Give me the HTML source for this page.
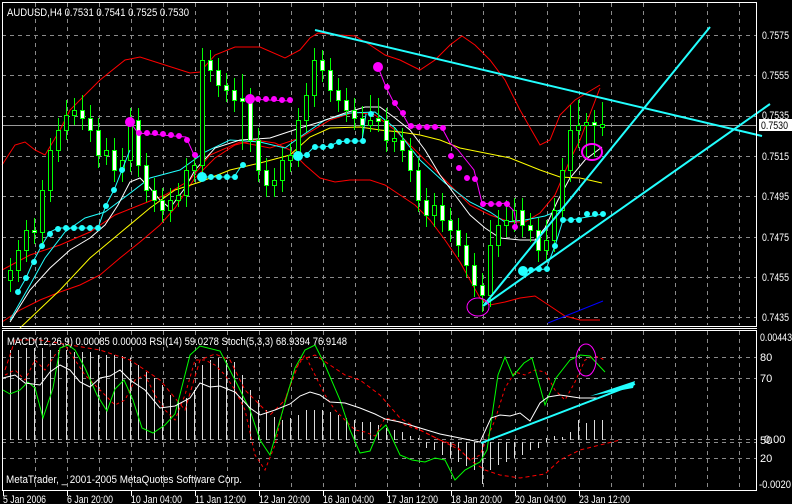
<!DOCTYPE html>
<html><head><meta charset="utf-8"><style>
html,body{margin:0;padding:0;background:#000;width:792px;height:504px;overflow:hidden}
svg{display:block}
text{font-family:"Liberation Sans",sans-serif;font-size:11px;fill:#fff}
</style></head><body>
<svg width="792" height="504" viewBox="0 0 792 504" xmlns="http://www.w3.org/2000/svg">
<rect width="792" height="504" fill="#000"/>
<g stroke="#8a8a8a" stroke-width="1" stroke-dasharray="4,4" fill="none">
<path d="M2 35.5H756M2 75.5H756M2 116.5H756M2 156.5H756M2 196.5H756M2 237.5H756M2 277.5H756M2 317.5H756"/>
<path d="M2 357.5H756M2 378.5H756M2 439.5H756M2 442.5H756M2 458.5H756"/>
<path d="M35.5 3V325M67.5 3V325M99.5 3V325M131.5 3V325M163.5 3V325M195.5 3V325M227.5 3V325M259.5 3V325M291.5 3V325M323.5 3V325M355.5 3V325M387.5 3V325M419.5 3V325M451.5 3V325M483.5 3V325M515.5 3V325M547.5 3V325M579.5 3V325M611.5 3V325M643.5 3V325M675.5 3V325M707.5 3V325M739.5 3V325"/>
<path d="M35.5 331V490M67.5 331V490M99.5 331V490M131.5 331V490M163.5 331V490M195.5 331V490M227.5 331V490M259.5 331V490M291.5 331V490M323.5 331V490M355.5 331V490M387.5 331V490M419.5 331V490M451.5 331V490M483.5 331V490M515.5 331V490M547.5 331V490M579.5 331V490M611.5 331V490M643.5 331V490M675.5 331V490M707.5 331V490M739.5 331V490"/>
</g>
<path d="M2 125.5H756" stroke="#9a9a9a"/>
<g fill="none" stroke="#f00" stroke-width="1">
<polyline points="2,165 15,145 25,142 35,150 45,155 60,130 70,110 85,95 100,80 125,60 140,57 165,65 190,73 200,72 215,55 235,47 260,47 285,58 300,50 310,38 318,33 340,35 355,36 370,45 385,55 400,60 420,70 435,60 450,45 462,36 475,45 490,60 505,80 520,110 540,145 550,140 560,115 575,100 600,85"/>
<polyline points="2,322 20,310 40,300 60,292 80,285 100,275 120,258 140,242 160,225 175,208 195,178 215,158 235,145 255,140 275,143 290,150 305,165 320,178 335,182 350,180 370,180 385,185 400,195 415,205 430,220 445,240 460,262 470,280 480,298 490,305 505,302 520,298 535,296 550,306 565,316 580,320 600,320"/>
<polyline points="2,270 30,255 60,245 90,232 115,215 140,205 165,195 190,180 210,155 240,142 270,148 300,138 330,120 355,112 375,115 395,130 410,145 430,165 450,185 470,205 490,215 510,222 525,222 540,213 555,195 570,160 580,140 600,88"/>
</g>
<polyline fill="none" stroke="#2ff" stroke-width="1" points="10,320 30,285 45,258 65,232 85,218 105,212 125,197 150,178 180,170 205,152 230,140 260,142 285,148 300,137 325,120 350,113 375,112 395,128 420,160 445,183 470,202 490,212 505,222 525,220 545,216 560,210"/>
<polyline fill="none" stroke="#fff" stroke-width="1" points="10,322 30,290 50,268 70,250 90,238 105,225 118,205 130,182 140,178 150,188 160,200 170,208 185,188 195,170 215,148 240,140 270,138 300,128 320,122 345,113 365,107 380,107 395,118 410,130 425,150 440,175 455,195 470,215 485,228 500,238 520,240 535,240 545,228 558,200 570,178 585,160 602,147"/>
<polyline fill="none" stroke="#ff0" stroke-width="1" points="20,328 60,290 90,258 120,233 150,208 175,190 200,182 230,170 260,163 290,155 310,137 330,128 360,127 380,130 400,132 420,135 440,140 460,148 480,152 510,158 540,170 560,177 580,178 602,183"/>
<path stroke="#0f0" stroke-width="1" fill="none" d="M10.5 258V292M18.5 240V282M26.5 220V262M34.5 218V244M42.5 180V244M50.5 138V202M58.5 118V162M66.5 100V140M74.5 98V125M82.5 95V130M90.5 105V142M98.5 118V168M106.5 138V165M114.5 138V182M122.5 148V182M130.5 108V172M138.5 108V177M146.5 153V202M154.5 178V212M162.5 188V222M170.5 188V222M178.5 183V207M186.5 158V207M194.5 153V182M202.5 48V177M210.5 50V82M218.5 58V97M226.5 73V102M234.5 78V112M242.5 74V150M250.5 88V152M258.5 128V182M266.5 158V197M274.5 168V197M282.5 148V192M290.5 143V172M298.5 108V167M306.5 83V132M314.5 48V107M322.5 50V82M330.5 58V102M338.5 78V112M346.5 88V122M354.5 98V130M362.5 106V137M370.5 95V132M378.5 98V132M386.5 108V152M394.5 128V152M402.5 128V162M410.5 138V182M418.5 158V212M426.5 188V227M434.5 193V227M442.5 193V232M450.5 208V242M458.5 218V257M466.5 233V277M474.5 253V297M482.5 273V312M490.5 220V307M498.5 210V257M506.5 200V237M514.5 198V232M522.5 198V237M530.5 213V242M538.5 218V262M546.5 220V262M554.5 198V252M562.5 158V222M570.5 105V182M578.5 100V148M586.5 113V157M594.5 110V157M602.5 102V136"/>
<g stroke="#0f0" stroke-width="1">
<g fill="#000">
<rect x="8.5" y="270.5" width="4" height="10"/><rect x="16.5" y="250.5" width="4" height="20"/><rect x="24.5" y="230.5" width="4" height="20"/><rect x="40.5" y="190.5" width="4" height="42"/><rect x="48.5" y="150.5" width="4" height="40"/><rect x="56.5" y="130.5" width="4" height="20"/><rect x="64.5" y="115.5" width="4" height="15"/><rect x="72.5" y="110.5" width="4" height="5"/><rect x="104.5" y="150.5" width="4" height="5"/><rect x="120.5" y="160.5" width="4" height="10"/><rect x="128.5" y="120.5" width="4" height="40"/><rect x="168.5" y="200.5" width="4" height="10"/><rect x="176.5" y="195.5" width="4" height="5"/><rect x="184.5" y="170.5" width="4" height="25"/><rect x="192.5" y="165.5" width="4" height="5"/><rect x="200.5" y="60.5" width="4" height="105"/><rect x="272.5" y="180.5" width="4" height="5"/><rect x="280.5" y="160.5" width="4" height="20"/><rect x="288.5" y="155.5" width="4" height="5"/><rect x="296.5" y="120.5" width="4" height="35"/><rect x="304.5" y="95.5" width="4" height="25"/><rect x="312.5" y="60.5" width="4" height="35"/><rect x="368.5" y="120.5" width="4" height="5"/><rect x="392.5" y="138.5" width="4" height="3"/><rect x="432.5" y="205.5" width="4" height="10"/><rect x="488.5" y="245.5" width="4" height="50"/><rect x="496.5" y="225.5" width="4" height="20"/><rect x="504.5" y="220.5" width="4" height="5"/><rect x="512.5" y="210.5" width="4" height="10"/><rect x="544.5" y="240.5" width="4" height="10"/><rect x="552.5" y="210.5" width="4" height="30"/><rect x="560.5" y="170.5" width="4" height="40"/><rect x="568.5" y="130.5" width="4" height="40"/><rect x="576.5" y="125.5" width="4" height="5"/><rect x="584.5" y="122.5" width="4" height="3"/><rect x="600.5" y="124.5" width="4" height="3"/>
</g>
<g fill="#fff">
<rect x="32.5" y="230.5" width="4" height="2"/><rect x="80.5" y="110.5" width="4" height="8"/><rect x="88.5" y="118.5" width="4" height="12"/><rect x="96.5" y="130.5" width="4" height="25"/><rect x="112.5" y="150.5" width="4" height="20"/><rect x="136.5" y="120.5" width="4" height="45"/><rect x="144.5" y="165.5" width="4" height="25"/><rect x="152.5" y="190.5" width="4" height="10"/><rect x="160.5" y="200.5" width="4" height="10"/><rect x="208.5" y="60.5" width="4" height="10"/><rect x="216.5" y="70.5" width="4" height="15"/><rect x="224.5" y="85.5" width="4" height="5"/><rect x="232.5" y="90.5" width="4" height="10"/><rect x="240.5" y="98.5" width="4" height="3"/><rect x="248.5" y="100.5" width="4" height="40"/><rect x="256.5" y="140.5" width="4" height="30"/><rect x="264.5" y="170.5" width="4" height="15"/><rect x="320.5" y="60.5" width="4" height="10"/><rect x="328.5" y="70.5" width="4" height="20"/><rect x="336.5" y="90.5" width="4" height="10"/><rect x="344.5" y="100.5" width="4" height="10"/><rect x="352.5" y="110.5" width="4" height="8"/><rect x="360.5" y="118.5" width="4" height="7"/><rect x="376.5" y="118.5" width="4" height="3"/><rect x="384.5" y="120.5" width="4" height="20"/><rect x="400.5" y="140.5" width="4" height="10"/><rect x="408.5" y="150.5" width="4" height="20"/><rect x="416.5" y="170.5" width="4" height="30"/><rect x="424.5" y="200.5" width="4" height="15"/><rect x="440.5" y="205.5" width="4" height="15"/><rect x="448.5" y="220.5" width="4" height="10"/><rect x="456.5" y="230.5" width="4" height="15"/><rect x="464.5" y="245.5" width="4" height="20"/><rect x="472.5" y="265.5" width="4" height="20"/><rect x="480.5" y="285.5" width="4" height="10"/><rect x="520.5" y="210.5" width="4" height="15"/><rect x="528.5" y="225.5" width="4" height="5"/><rect x="536.5" y="230.5" width="4" height="20"/><rect x="592.5" y="122.5" width="4" height="3"/>
</g></g>
<g fill="#f0f" stroke="#f0f">
<polyline fill="none" points="130,122 138,133 186,137 194,155"/>
<circle cx="130" cy="122" r="4.5"/>
<circle cx="139" cy="133" r="2.5"/><circle cx="147" cy="133" r="2.5"/><circle cx="155" cy="133" r="2.5"/><circle cx="163" cy="134" r="2.5"/><circle cx="171" cy="135" r="2.5"/><circle cx="179" cy="136" r="2.5"/><circle cx="187" cy="140" r="2.5"/><circle cx="195" cy="155" r="2.5"/>
<polyline fill="none" points="250,99 290,101"/>
<circle cx="250" cy="99" r="4.5"/><circle cx="258" cy="99" r="2.5"/><circle cx="266" cy="99" r="2.5"/><circle cx="274" cy="99" r="2.5"/><circle cx="282" cy="100" r="2.5"/><circle cx="290" cy="100" r="2.5"/>
<polyline fill="none" points="378,67 386,87 394,103 402,113 410,127 418,127 426,127 434,127 442,128 450,143 458,150 466,160 474,170 482,203 490,204 498,204 506,203 514,211 517,228"/>
<circle cx="378" cy="67" r="4.5"/><circle cx="387" cy="87" r="2.5"/><circle cx="395" cy="103" r="2.5"/><circle cx="403" cy="113" r="2.5"/><circle cx="411" cy="126" r="2.5"/><circle cx="419" cy="127" r="2.5"/><circle cx="427" cy="127" r="2.5"/><circle cx="435" cy="127" r="2.5"/><circle cx="443" cy="128" r="2.5"/><circle cx="451" cy="156" r="2.5"/><circle cx="459" cy="168" r="2.5"/><circle cx="467" cy="178" r="2.5"/><circle cx="475" cy="179" r="2.5"/><circle cx="483" cy="204" r="2.5"/><circle cx="491" cy="204" r="2.5"/><circle cx="499" cy="204" r="2.5"/><circle cx="507" cy="204" r="2.5"/><circle cx="515" cy="227" r="2.5"/>
</g>
<g fill="#2ff" stroke="#2ff">
<polyline fill="none" points="18,292 26,278 34,260 42,245 50,232 58,228 98,228 106,205 114,190 122,170 130,150"/>
<circle cx="18" cy="292" r="2.5"/><circle cx="26" cy="278" r="2.5"/><circle cx="34" cy="262" r="2.5"/><circle cx="42" cy="246" r="2.5"/><circle cx="50" cy="234" r="2.5"/><circle cx="58" cy="229" r="2.5"/><circle cx="66" cy="228" r="2.5"/><circle cx="74" cy="228" r="2.5"/><circle cx="82" cy="228" r="2.5"/><circle cx="90" cy="228" r="2.5"/><circle cx="98" cy="228" r="2.5"/><circle cx="106" cy="206" r="2.5"/><circle cx="114" cy="190" r="2.5"/><circle cx="122" cy="170" r="2.5"/>
<polyline fill="none" points="202,177 234,177 242,165"/>
<circle cx="202" cy="177" r="4.5"/><circle cx="211" cy="177" r="2.5"/><circle cx="219" cy="177" r="2.5"/><circle cx="227" cy="177" r="2.5"/><circle cx="235" cy="177" r="2.5"/><circle cx="243" cy="165" r="2.5"/>
<polyline fill="none" points="298,156 306,155 314,147 322,147 330,146 338,142 346,141 354,141 362,141 366,114"/>
<circle cx="298" cy="156" r="4.5"/><circle cx="307" cy="155" r="2.5"/><circle cx="315" cy="147" r="2.5"/><circle cx="323" cy="147" r="2.5"/><circle cx="331" cy="146" r="2.5"/><circle cx="339" cy="142" r="2.5"/><circle cx="347" cy="141" r="2.5"/><circle cx="355" cy="141" r="2.5"/><circle cx="363" cy="141" r="2.5"/><circle cx="371" cy="114" r="2.5"/>
<polyline fill="none" points="522,271 546,269 555,246 563,220 571,220 603,214"/>
<circle cx="523" cy="271" r="4.5"/><circle cx="531" cy="270" r="2.5"/><circle cx="539" cy="269" r="2.5"/><circle cx="547" cy="269" r="2.5"/><circle cx="555" cy="246" r="2.5"/><circle cx="563" cy="220" r="2.5"/><circle cx="571" cy="220" r="2.5"/><circle cx="579" cy="220" r="2.5"/><circle cx="587" cy="214" r="2.5"/><circle cx="595" cy="214" r="2.5"/><circle cx="603" cy="214" r="2.5"/>
</g>
<line x1="548" y1="323" x2="603" y2="301" stroke="#00f"/>
<g stroke="#2ff" stroke-width="2" fill="none">
<line x1="315" y1="30" x2="762" y2="136"/>
<line x1="484" y1="305" x2="710" y2="27"/>
<line x1="483" y1="306" x2="770" y2="104"/>
</g>
<ellipse cx="478" cy="307" rx="11" ry="9" fill="none" stroke="#f0f"/>
<ellipse cx="592" cy="152" rx="10" ry="8" fill="none" stroke="#f0f" stroke-width="2"/>
<rect x="2.5" y="2.5" width="754" height="324" fill="none" stroke="#fff"/>
<rect x="2.5" y="330.5" width="754" height="160" fill="none" stroke="#fff"/>
<line x1="2" y1="328.5" x2="757" y2="328.5" stroke="#fff"/>
<path stroke="#ddd" stroke-width="1" d="M10.5 440V350M18.5 440V350M26.5 440V348M34.5 440V348M42.5 440V348M50.5 440V350M58.5 440V350M66.5 440V350M74.5 440V352M82.5 440V352M90.5 440V352M98.5 440V355M106.5 440V355M114.5 440V355M122.5 440V356M130.5 440V358M138.5 440V365M146.5 440V372M154.5 440V378M162.5 440V385M170.5 440V395M178.5 440V400M186.5 440V398M194.5 440V390M202.5 440V365M210.5 440V360M218.5 440V358M226.5 440V360M234.5 440V362M242.5 440V375M250.5 440V390M258.5 440V400M266.5 440V410M274.5 440V417M282.5 440V420M290.5 440V418M298.5 440V415M306.5 440V410M314.5 440V410M322.5 440V410M330.5 440V412M338.5 440V415M346.5 440V418M354.5 440V420M362.5 440V422M370.5 440V422M378.5 440V425M386.5 440V428M394.5 440V430M402.5 440V432M410.5 440V436M418.5 440V438M426.5 442V448M434.5 442V450M442.5 442V455M450.5 442V458M458.5 442V462M466.5 442V466M474.5 442V470M482.5 442V484M490.5 442V470M498.5 442V465M506.5 442V462M514.5 442V458M522.5 442V455M530.5 442V450M538.5 442V448M546.5 442V438M554.5 440V436M562.5 440V437M570.5 440V432M578.5 440V420M586.5 440V423M594.5 440V420M602.5 440V420"/>
<polyline fill="none" stroke="#f00" stroke-dasharray="4,3" points="5,370 15,340 40,340 70,345 100,350 130,360 160,380 185,410 200,360 215,354 230,360 245,390 260,405 270,415 285,400 300,360 315,355 330,365 345,375 360,380 380,395 400,418 420,430 440,440 455,445 470,460 485,470 500,475 520,478 545,474 560,460 580,450 600,445 620,440"/>
<polyline fill="none" stroke="#f00" stroke-dasharray="3,3" points="5,375 15,370 25,380 35,360 45,370 55,355 65,345 75,360 85,375 95,385 105,395 115,405 125,400 135,380 145,375 155,395 165,410 175,420 185,395 195,360 205,360 215,365 225,375 235,390 245,410 255,455 265,470 275,445 285,400 295,370 305,355 315,375 325,395 335,410 345,420 355,430 365,432 375,436 385,418 395,420 405,425 420,430 440,440 460,450 470,460 480,455 495,420 505,388 515,372 525,375 535,370 545,372 555,390 565,400 575,382 585,360 595,356 605,360"/>
<polyline fill="none" stroke="#0f0" stroke-width="1" points="3,390 10,394 20,390 28,382 35,388 43,418 53,388 60,348 68,345 75,350 85,368 97,395 107,411 115,389 124,380 133,400 142,428 153,433 165,425 175,414 190,355 200,346 220,351 235,380 250,410 260,440 270,455 280,420 295,368 305,350 315,345 325,365 340,400 350,430 360,453 370,451 378,432 386,425 400,455 412,460 425,462 435,458 445,460 455,480 465,470 480,462 487,450 498,375 505,357 513,376 524,363 532,358 545,405 556,378 570,360 580,355 590,356 605,372"/>
<polyline fill="none" stroke="#fff" stroke-width="1" points="3,378 15,375 25,383 40,385 50,372 60,365 70,370 80,382 90,387 100,378 110,376 120,370 130,380 145,390 160,408 175,406 190,398 200,383 210,387 220,386 235,392 250,408 260,415 275,410 290,404 300,396 310,392 320,395 330,402 345,403 360,408 375,414 385,419 400,422 420,428 440,434 460,438 480,442 491,418 500,415 510,416 520,413 530,421 540,403 548,397 560,395 580,398 600,398"/>
<line x1="481" y1="443" x2="635" y2="384" stroke="#2ff" stroke-width="2"/>
<polygon points="590,396 635,381 633,388" fill="#2ff"/>
<ellipse cx="586" cy="360" rx="10" ry="16" fill="none" stroke="#f0f"/>
<text x="7" y="16" textLength="182" lengthAdjust="spacingAndGlyphs">AUDUSD,H4  0.7531 0.7541 0.7525 0.7530</text>
<text x="7" y="345" textLength="340" lengthAdjust="spacingAndGlyphs">MACD(12,26,9) 0.00085 0.00003  RSI(14) 59.0278  Stoch(5,3,3) 68.9394 76.9148</text>
<text x="6" y="483" textLength="236" lengthAdjust="spacingAndGlyphs">MetaTrader, _ 2001-2005 MetaQuotes Software Corp.</text>
<g>
<text x="762" y="39" textLength="27" lengthAdjust="spacingAndGlyphs">0.7575</text><text x="762" y="79" textLength="27" lengthAdjust="spacingAndGlyphs">0.7555</text><text x="762" y="119" textLength="27" lengthAdjust="spacingAndGlyphs">0.7535</text><text x="762" y="160" textLength="27" lengthAdjust="spacingAndGlyphs">0.7515</text><text x="762" y="200" textLength="27" lengthAdjust="spacingAndGlyphs">0.7495</text><text x="762" y="241" textLength="27" lengthAdjust="spacingAndGlyphs">0.7475</text><text x="762" y="281" textLength="27" lengthAdjust="spacingAndGlyphs">0.7455</text><text x="762" y="321" textLength="27" lengthAdjust="spacingAndGlyphs">0.7435</text>
<rect x="759" y="119" width="33" height="12" fill="#fff"/>
<text x="761" y="129" style="fill:#000" textLength="27" lengthAdjust="spacingAndGlyphs">0.7530</text>
<text x="760" y="341" textLength="32" lengthAdjust="spacingAndGlyphs">0.00443</text><text x="760" y="361">80</text><text x="760" y="382">70</text><text x="760" y="444">50</text><text x="764" y="443">0.00</text><text x="760" y="462">20</text><text x="759" y="488" textLength="32" lengthAdjust="spacingAndGlyphs">-0.0020</text>
</g>
<g stroke="#fff"><path d="M3.5 491V496M67.5 491V496M131.5 491V496M195.5 491V496M259.5 491V496M323.5 491V496M387.5 491V496M451.5 491V496M515.5 491V496M579.5 491V496"/></g>
<text x="3" y="503" textLength="43" lengthAdjust="spacingAndGlyphs">5 Jan 2006</text><text x="67" y="503" textLength="46" lengthAdjust="spacingAndGlyphs">6 Jan 20:00</text><text x="131" y="503" textLength="51" lengthAdjust="spacingAndGlyphs">10 Jan 04:00</text><text x="195" y="503" textLength="51" lengthAdjust="spacingAndGlyphs">11 Jan 12:00</text><text x="259" y="503" textLength="51" lengthAdjust="spacingAndGlyphs">12 Jan 20:00</text><text x="323" y="503" textLength="51" lengthAdjust="spacingAndGlyphs">16 Jan 04:00</text><text x="387" y="503" textLength="51" lengthAdjust="spacingAndGlyphs">17 Jan 12:00</text><text x="451" y="503" textLength="51" lengthAdjust="spacingAndGlyphs">18 Jan 20:00</text><text x="515" y="503" textLength="51" lengthAdjust="spacingAndGlyphs">20 Jan 04:00</text><text x="579" y="503" textLength="51" lengthAdjust="spacingAndGlyphs">23 Jan 12:00</text>
</svg>
</body></html>
